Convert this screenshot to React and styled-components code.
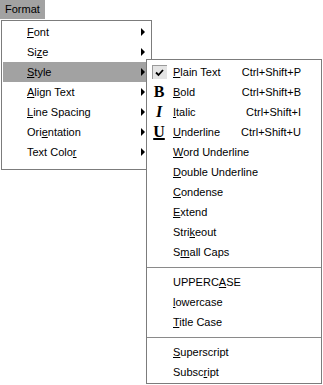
import React from "react";
import styled, { createGlobalStyle } from "styled-components";

const Global = createGlobalStyle`
  html, body { margin: 0; padding: 0; background: #ffffff; }
  body { font-family: "Liberation Sans", Arial, sans-serif; font-size: 11px; color: #000; }
`;

const Page = styled.div`
  position: relative;
  width: 323px;
  height: 385px;
  overflow: hidden;
  background: #ffffff;
`;

const MenuBar = styled.div`
  display: flex;
  height: 19px;
`;

const BarItem = styled.div`
  display: flex;
  align-items: center;
  padding: 0 4px 0 5px;
  width: 36px;
  background: #a2a2a2;
  color: #000;
  font-size: 11px;
  line-height: 19px;
`;

const Menu = styled.div`
  margin: 1px 0 0 1px;
  width: 149px;
  border: 1px solid #7c7c7c;
  background: #ffffff;
  padding: 1px 0 7px;
  box-sizing: content-box;
`;

const Row = styled.div`
  display: flex;
  align-items: center;
  height: 20px;
  margin: 0 0 0 1px;
  padding: 0 6px 0 24px;
  background: ${(p) => (p.$active ? "#a2a2a2" : "transparent")};
`;

const Label = styled.span`
  flex: 1;
  white-space: nowrap;
  u { text-underline-offset: 1px; }
`;

const Arrow = styled.span`
  width: 0;
  height: 0;
  border-top: 4px solid transparent;
  border-bottom: 4px solid transparent;
  border-left: 4px solid #000;
`;

const SubMenu = styled.div`
  position: absolute;
  left: 146px;
  top: 59px;
  width: 174px;
  border: 1px solid #7c7c7c;
  background: #ffffff;
  padding: 2px 0 1px;
`;

const SubRow = styled.div`
  display: flex;
  align-items: center;
  height: 20px;
  padding: 0 20px 0 4px;
`;

const IconCell = styled.span`
  width: 16px;
  height: 16px;
  margin-right: 6px;
  display: flex;
  align-items: center;
  justify-content: center;
`;

const CheckBox = styled.span`
  width: 15px;
  height: 14px;
  display: flex;
  align-items: center;
  justify-content: center;
  background: #e4e4e4;
  border-top: 1px solid #9a9a9a;
  border-left: 1px solid #9a9a9a;
  box-sizing: border-box;
`;

const Glyph = styled.span`
  font-family: "Liberation Serif", "Times New Roman", serif;
  font-weight: bold;
  font-size: 16px;
  line-height: 16px;
  font-style: ${(p) => (p.$italic ? "italic" : "normal")};
  text-decoration: ${(p) => (p.$underline ? "underline" : "none")};
  text-underline-offset: 1px;
  text-decoration-thickness: 2px;
`;

const Shortcut = styled.span`
  white-space: nowrap;
`;

const Separator = styled.div`
  height: 10px;
  display: flex;
  align-items: center;
  &::before {
    content: "";
    flex: 1;
    height: 1px;
    background: #8a8a8a;
  }
`;

function Mn({ text, u }) {
  return (
    <Label>
      {text.slice(0, u)}
      <u>{text[u]}</u>
      {text.slice(u + 1)}
    </Label>
  );
}

const mainItems = [
  ["Font", 0],
  ["Size", 2],
  ["Style", 0, true],
  ["Align Text", 0],
  ["Line Spacing", 0],
  ["Orientation", 3],
  ["Text Color", 9],
];

const subItems = [
  { label: "Plain Text", u: 0, sc: "Ctrl+Shift+P", icon: "check" },
  { label: "Bold", u: 0, sc: "Ctrl+Shift+B", icon: "B" },
  { label: "Italic", u: 0, sc: "Ctrl+Shift+I", icon: "I" },
  { label: "Underline", u: 0, sc: "Ctrl+Shift+U", icon: "U" },
  { label: "Word Underline", u: 0 },
  { label: "Double Underline", u: 0 },
  { label: "Condense", u: 0 },
  { label: "Extend", u: 0 },
  { label: "Strikeout", u: 4 },
  { label: "Small Caps", u: 1 },
  "sep",
  { label: "UPPERCASE", u: 6 },
  { label: "lowercase", u: 0 },
  { label: "Title Case", u: 0 },
  "sep",
  { label: "Superscript", u: 0 },
  { label: "Subscript", u: 5 },
];

function Icon({ kind }) {
  if (kind === "check")
    return (
      <CheckBox>
        <svg width="9" height="8" viewBox="0 0 9 8">
          <path d="M1 3.5 L3.5 6 L8 1" stroke="#000" strokeWidth="1.8" fill="none" />
        </svg>
      </CheckBox>
    );
  if (kind === "B") return <Glyph>B</Glyph>;
  if (kind === "I") return <Glyph $italic>I</Glyph>;
  if (kind === "U") return <Glyph $underline>U</Glyph>;
  return null;
}

export default function App() {
  return (
    <Page>
      <Global />
      <MenuBar>
        <BarItem>Format</BarItem>
      </MenuBar>
      <Menu>
        {mainItems.map(([t, u, a]) => (
          <Row key={t} $active={a}>
            <Mn text={t} u={u} />
            <Arrow />
          </Row>
        ))}
      </Menu>
      <SubMenu>
        {subItems.map((it, i) =>
          it === "sep" ? (
            <Separator key={i} />
          ) : (
            <SubRow key={it.label}>
              <IconCell>{it.icon && <Icon kind={it.icon} />}</IconCell>
              <Mn text={it.label} u={it.u} />
              {it.sc && <Shortcut>{it.sc}</Shortcut>}
            </SubRow>
          )
        )}
      </SubMenu>
    </Page>
  );
}
